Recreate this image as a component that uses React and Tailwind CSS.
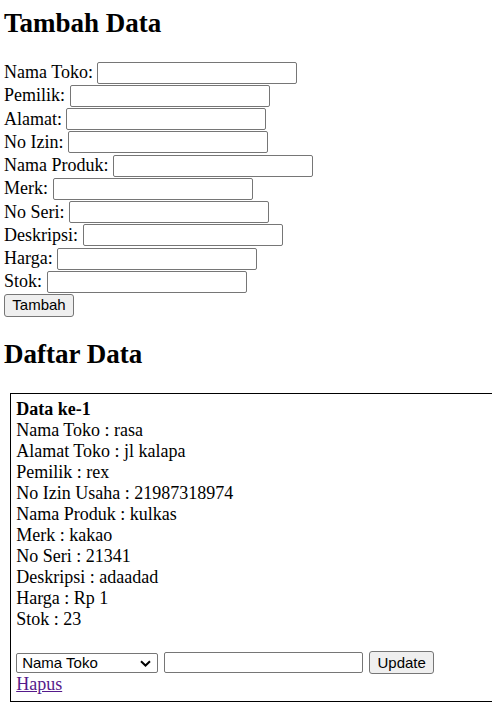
import { useState } from 'react';

const fields = [
  { key: 'namaToko', label: 'Nama Toko:' },
  { key: 'pemilik', label: 'Pemilik:' },
  { key: 'alamat', label: 'Alamat:' },
  { key: 'noIzin', label: 'No Izin:' },
  { key: 'namaProduk', label: 'Nama Produk:' },
  { key: 'merk', label: 'Merk:' },
  { key: 'noSeri', label: 'No Seri:' },
  { key: 'deskripsi', label: 'Deskripsi:' },
  { key: 'harga', label: 'Harga:' },
  { key: 'stok', label: 'Stok:' },
];

const initialData = [
  {
    namaToko: 'rasa',
    alamat: 'jl kalapa',
    pemilik: 'rex',
    noIzin: '21987318974',
    namaProduk: 'kulkas',
    merk: 'kakao',
    noSeri: '21341',
    deskripsi: 'adaadad',
    harga: '1',
    stok: '23',
  },
];

const DataCard = ({ item, index, onUpdate, onDelete }) => {
  const [kolom, setKolom] = useState('namaToko');
  const [nilai, setNilai] = useState('');

  return (
    <div className="border border-black mx-[5.6px] p-[5.6px] w-[500px] leading-[21px]">
      <div className="font-bold">Data ke-{index + 1}</div>
      <div>Nama Toko : {item.namaToko}</div>
      <div>Alamat Toko : {item.alamat}</div>
      <div>Pemilik : {item.pemilik}</div>
      <div>No Izin Usaha : {item.noIzin}</div>
      <div>Nama Produk : {item.namaProduk}</div>
      <div>Merk : {item.merk}</div>
      <div>No Seri : {item.noSeri}</div>
      <div>Deskripsi : {item.deskripsi}</div>
      <div>Harga : Rp {item.harga}</div>
      <div>Stok : {item.stok}</div>
      <div className="h-[21px]" />
      <div className="flex items-center gap-[6px] h-[23px] font-['Liberation_Sans',Arial,sans-serif] text-[15px]">
        <div className="relative flex">
          <select
            value={kolom}
            onChange={(e) => setKolom(e.target.value)}
            className="appearance-none w-[142px] h-[20px] border border-[#767676] rounded-[2px] bg-white pl-[5px] leading-[18px] text-black"
          >
            <option value="namaToko">Nama Toko</option>
            <option value="alamat">Alamat Toko</option>
            <option value="pemilik">Pemilik</option>
            <option value="noIzin">No Izin Usaha</option>
            <option value="namaProduk">Nama Produk</option>
            <option value="merk">Merk</option>
            <option value="noSeri">No Seri</option>
            <option value="deskripsi">Deskripsi</option>
            <option value="harga">Harga</option>
            <option value="stok">Stok</option>
          </select>
          <svg
            className="absolute right-[7px] top-[7px] pointer-events-none"
            width="11"
            height="7"
            viewBox="0 0 11 7"
          >
            <path d="M1 1.2 L5.5 5.5 L10 1.2" fill="none" stroke="#000" strokeWidth="2" />
          </svg>
        </div>
        <input
          value={nilai}
          onChange={(e) => setNilai(e.target.value)}
          className="w-[199px] h-[21px] border border-[#767676] rounded-[2px] bg-white px-[2px]"
        />
        <button
          onClick={() => onUpdate(index, kolom, nilai)}
          className="w-[65px] h-[23px] border border-[#767676] rounded-[3px] bg-[#efefef] text-black"
        >
          Update
        </button>
      </div>
      <div className="h-[21px]">
        <a
          href="#"
          onClick={(e) => {
            e.preventDefault();
            onDelete(index);
          }}
          className="text-[#551a8b] underline"
        >
          Hapus
        </a>
      </div>
    </div>
  );
};

export default function App() {
  const [form, setForm] = useState({});
  const [data, setData] = useState(initialData);

  const handleTambah = () => {
    setData((prev) => [...prev, { ...form }]);
    setForm({});
  };

  const handleUpdate = (index, kolom, nilai) => {
    setData((prev) => prev.map((d, i) => (i === index ? { ...d, [kolom]: nilai } : d)));
  };

  const handleDelete = (index) => {
    setData((prev) => prev.filter((_, i) => i !== index));
  };

  return (
    <div className="w-[492px] overflow-hidden px-[4px] pt-[8px] pb-[6px] font-['Liberation_Serif','Times_New_Roman',serif] text-[18px] text-black bg-white">
      <h2 className="text-[27px] font-bold leading-[30px] mb-[23px]">Tambah Data</h2>
      {fields.map((f) => (
        <div key={f.key} className="flex items-center h-[23.25px] whitespace-pre">
          <span>{f.label} </span>
          <input
            value={form[f.key] || ''}
            onChange={(e) => setForm({ ...form, [f.key]: e.target.value })}
            className="w-[200px] h-[22px] border border-[#767676] rounded-[2px] bg-white px-[2px] font-['Liberation_Sans',Arial,sans-serif] text-[15px]"
          />
        </div>
      ))}
      <div className="flex h-[23px]">
        <button
          onClick={handleTambah}
          className="h-[23px] w-[70px] border border-[#767676] rounded-[3px] bg-[#efefef] font-['Liberation_Sans',Arial,sans-serif] text-[15px] leading-[18px]"
        >
          Tambah
        </button>
      </div>
      <h2 className="text-[27px] font-bold leading-[30px] mt-[22.4px] mb-[23.7px]">Daftar Data</h2>
      {data.map((item, i) => (
        <DataCard key={i} item={item} index={i} onUpdate={handleUpdate} onDelete={handleDelete} />
      ))}
    </div>
  );
}
